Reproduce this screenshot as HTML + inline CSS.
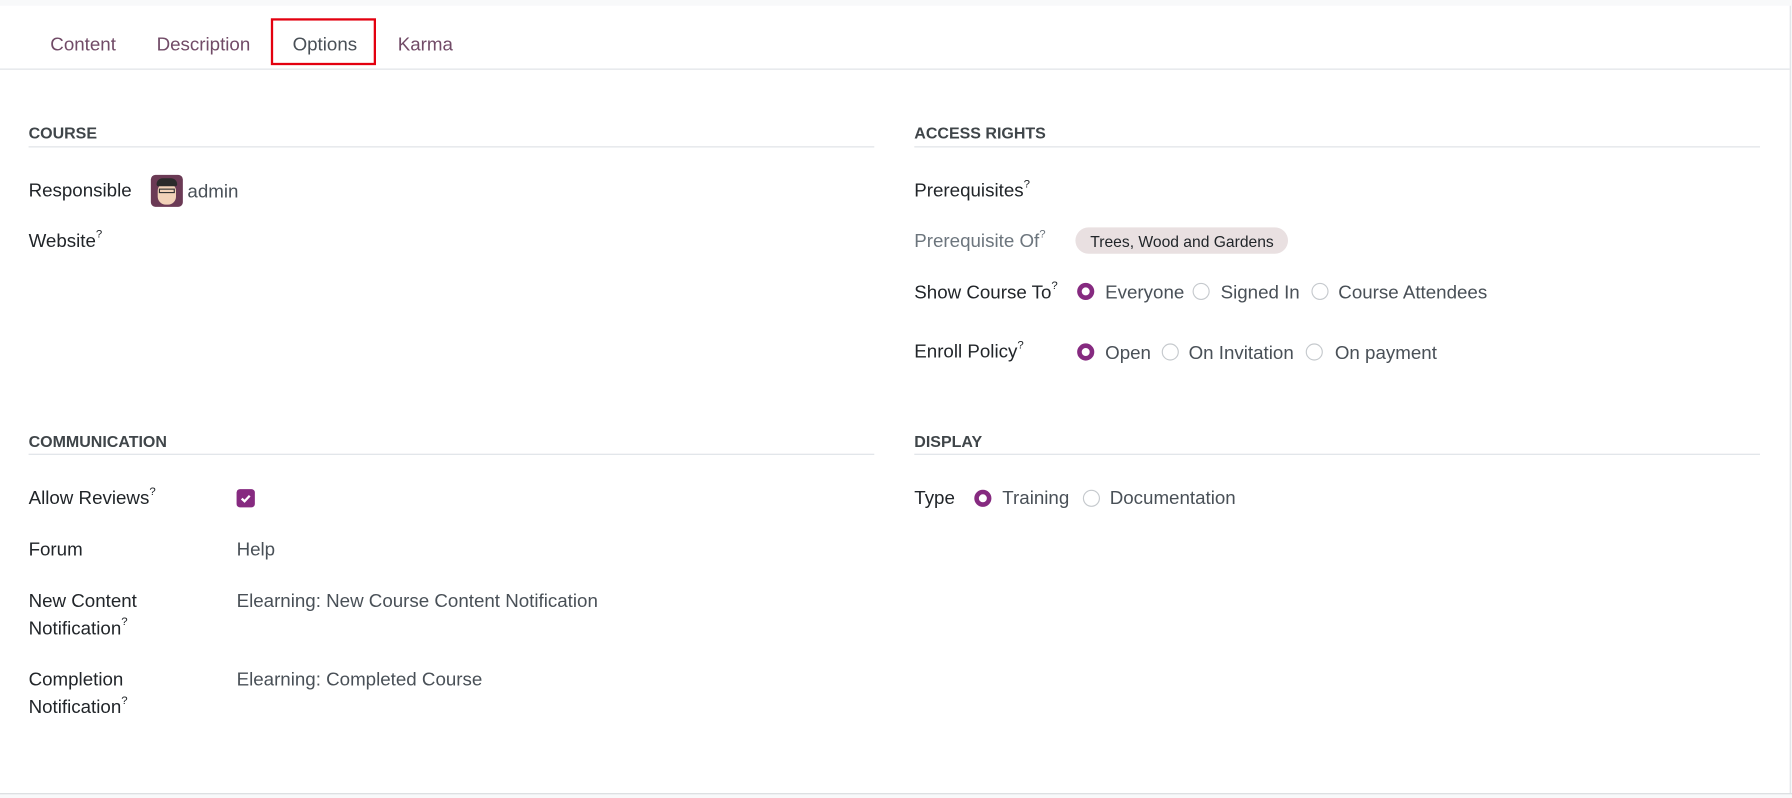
<!DOCTYPE html>
<html><head><meta charset="utf-8"><style>
html,body{margin:0;padding:0;width:1792px;height:798px;overflow:hidden;background:#f8f9fa;}
#w{position:absolute;left:0;top:0;width:1568px;height:698px;transform:scale(1.142857);transform-origin:0 0;font-family:"Liberation Sans",sans-serif;}
.sheet{position:absolute;left:0;top:5px;width:1566px;height:689px;background:#fff;border-right:1px solid #dee2e6;}
.t{position:absolute;white-space:nowrap;font-size:16.4px;line-height:18px;transform:translateY(-8px);color:#212529;}
.tab{color:#714b67;}
.v{color:#495057;}
.h{font-weight:bold;font-size:14px;color:#3f4549;}
.ln{position:absolute;height:1px;background:#dee2e6;}
sup{font-size:10px;line-height:0;position:relative;top:-2px;vertical-align:super;}
.r{position:absolute;width:15px;height:15px;border-radius:50%;border:1px solid #c5c9cd;box-sizing:border-box;background:#fff;transform:translate(-7.5px,-7.5px);}
.r.on{background:#fff;border:4.5px solid #862a80;}
</style></head><body><div id="w">
<div class="sheet"></div>
<div class="t tab" style="left:44px;top:38px">Content</div>
<div class="t tab" style="left:137px;top:38px">Description</div>
<div class="t" style="left:256px;top:38px;color:#495057">Options</div>
<div style="position:absolute;left:237px;top:16px;width:88px;height:37px;border:2px solid #e3000f"></div>
<div class="t tab" style="left:348px;top:38px">Karma</div>
<div class="ln" style="left:0;top:60px;width:1566px"></div>

<div class="t h" style="left:25px;top:115px">COURSE</div>
<div class="ln" style="left:25px;top:128px;width:740px"></div>
<div class="t h" style="left:800px;top:115px">ACCESS RIGHTS</div>
<div class="ln" style="left:800px;top:128px;width:740px"></div>

<div class="t" style="left:25px;top:166px">Responsible</div>
<div style="position:absolute;left:132px;top:153px;width:28px;height:28px;border-radius:4px;background:#6b3a55;overflow:hidden">
<div style="position:absolute;left:6px;top:7px;width:16px;height:19px;border-radius:7px;background:#f2d2b8"></div>
<div style="position:absolute;left:5px;top:3px;width:18px;height:7px;border-radius:6px 6px 2px 2px;background:#2b2b2b"></div>
<div style="position:absolute;left:7px;top:12px;width:14px;height:4px;border:1px solid #333;box-sizing:border-box"></div>
</div>
<div class="t v" style="left:164px;top:167px">admin</div>
<div class="t" style="left:25px;top:210px">Website<sup>?</sup></div>

<div class="t" style="left:800px;top:166px">Prerequisites<sup>?</sup></div>
<div class="t" style="left:800px;top:210px;color:#6c757d">Prerequisite Of<sup>?</sup></div>
<div style="position:absolute;left:941px;top:199px;width:186px;height:23px;border-radius:12px;background:#e9e0e1"></div>
<div class="t" style="left:954px;top:211px;font-size:13.7px">Trees, Wood and Gardens</div>

<div class="t" style="left:800px;top:255px">Show Course To<sup>?</sup></div>
<div class="r on" style="left:950px;top:255px"></div><div class="t v" style="left:967px;top:255px">Everyone</div>
<div class="r" style="left:1051px;top:255px"></div><div class="t v" style="left:1068px;top:255px">Signed In</div>
<div class="r" style="left:1155px;top:255px"></div><div class="t v" style="left:1171px;top:255px">Course Attendees</div>

<div class="t" style="left:800px;top:307px">Enroll Policy<sup>?</sup></div>
<div class="r on" style="left:950px;top:308px"></div><div class="t v" style="left:967px;top:308px">Open</div>
<div class="r" style="left:1024px;top:308px"></div><div class="t v" style="left:1040px;top:308px">On Invitation</div>
<div class="r" style="left:1150px;top:308px"></div><div class="t v" style="left:1168px;top:308px">On payment</div>

<div class="t h" style="left:25px;top:385px">COMMUNICATION</div>
<div class="ln" style="left:25px;top:397px;width:740px"></div>
<div class="t h" style="left:800px;top:385px">DISPLAY</div>
<div class="ln" style="left:800px;top:397px;width:740px"></div>

<div class="t" style="left:25px;top:435px">Allow Reviews<sup>?</sup></div>
<div style="position:absolute;left:207px;top:428px;width:16px;height:16px;border-radius:3px;background:#862a80"></div>
<svg style="position:absolute;left:207px;top:428px" width="16" height="16"><path d="M4.5 8.3 L7 10.6 L11.5 5.8" stroke="#fff" stroke-width="2" fill="none"/></svg>
<div class="t" style="left:25px;top:480px">Forum</div>
<div class="t v" style="left:207px;top:480px">Help</div>
<div class="t" style="left:25px;top:525px">New Content</div>
<div class="t" style="left:25px;top:549px">Notification<sup>?</sup></div>
<div class="t v" style="left:207px;top:525px">Elearning: New Course Content Notification</div>
<div class="t" style="left:25px;top:594px">Completion</div>
<div class="t" style="left:25px;top:618px">Notification<sup>?</sup></div>
<div class="t v" style="left:207px;top:594px">Elearning: Completed Course</div>

<div class="t" style="left:800px;top:435px">Type</div>
<div class="r on" style="left:860px;top:436px"></div><div class="t v" style="left:877px;top:435px">Training</div>
<div class="r" style="left:955px;top:436px"></div><div class="t v" style="left:971px;top:435px">Documentation</div>
<div class="ln" style="left:0;top:694px;width:1568px;background:#d8dbde"></div>
</div></body></html>
